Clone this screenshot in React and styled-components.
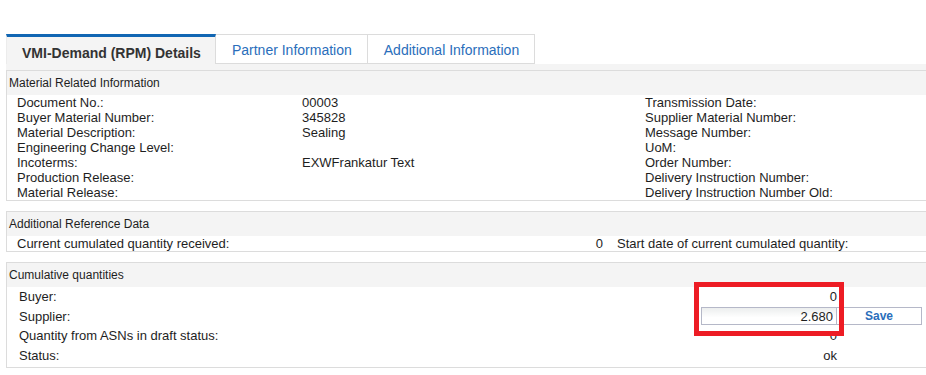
import { Fragment } from "react";
import styled, { createGlobalStyle } from "styled-components";

const GlobalStyle = createGlobalStyle`
  html, body {
    margin: 0;
    padding: 0;
    background: #fff;
    overflow: hidden;
  }
  body {
    font-family: "Liberation Sans", Arial, sans-serif;
    font-size: 13px;
    color: #1e1e1e;
  }
`;

const Page = styled.div`
  width: 930px;
  padding: 34px 0 0 6px;
  box-sizing: border-box;
`;

const TabBar = styled.div`
  display: flex;
  height: 30px;
`;

const Tab = styled.div`
  display: flex;
  align-items: center;
  padding: ${(p) => (p.$active ? "4px 14px 0 15px" : "1px 15px 0 16px")};
  box-sizing: border-box;
  font-size: 14px;
  font-weight: ${(p) => (p.$active ? "bold" : "normal")};
  color: ${(p) => (p.$active ? "#333" : "#2a6ebb")};
  background: ${(p) => (p.$active ? "#f4f4f4" : "#fff")};
  border: 1px solid #dcdcdc;
  border-left: ${(p) => (p.$active ? "1px solid #ececec" : "none")};
  border-top: ${(p) => (p.$active ? "3px solid #1166b3" : "1px solid #dcdcdc")};
  border-bottom: ${(p) => (p.$active ? "none" : "1px solid #dcdcdc")};
  cursor: pointer;
`;

const TabStrip = styled.div`
  height: 6px;
  background: #f4f4f4;
`;

const Panel = styled.section`
  position: relative;
  border: 1px solid #dcdcdc;
  border-right: none;
  margin-bottom: ${(p) => p.$gap || 0}px;
`;

const PanelHeader = styled.div`
  height: 24px;
  line-height: 24px;
  padding-left: 2px;
  background: #f4f4f4;
  font-size: 12px;
  color: #1e1e1e;
`;

const InfoGrid = styled.div`
  display: grid;
  grid-template-columns: 285px 343px 1fr;
  grid-auto-rows: 15px;
  padding-left: 10px;
  line-height: 15px;
`;

const RefGrid = styled.div`
  display: grid;
  grid-template-columns: 443px 157px 1fr;
  padding-left: 10px;
  height: 15px;
  line-height: 15px;
`;

const QtyGrid = styled.div`
  display: grid;
  grid-template-columns: 682px 136px 85px;
  grid-template-rows: 19px 20px 19px 20px;
  padding: 0 0 2px 12px;
  align-items: center;
`;

const Cell = styled.div`
  white-space: nowrap;
  text-align: ${(p) => (p.$right ? "right" : "left")};
  padding-right: ${(p) => p.$pad || 0}px;
`;

const QtyInput = styled.input`
  width: 136px;
  height: 18px;
  box-sizing: border-box;
  border: 1px solid #b5b8c8;
  background: linear-gradient(#eceeee, #fff 60%);
  font-family: "Liberation Sans", Arial, sans-serif;
  font-size: 13px;
  color: #1e1e1e;
  text-align: right;
  padding: 0 3px 0 0;
  outline: none;
`;

const SaveButton = styled.button`
  width: 85px;
  height: 18px;
  box-sizing: border-box;
  border: 1px solid #b5b8c8;
  border-left: none;
  background: #fff;
  font-family: "Liberation Sans", Arial, sans-serif;
  font-size: 12px;
  font-weight: bold;
  color: #2a6ebb;
  padding: 0;
  cursor: pointer;
`;

const Highlight = styled.div`
  position: absolute;
  left: 687px;
  top: 19px;
  width: 150px;
  height: 54px;
  box-sizing: border-box;
  border: 5px solid #ed1c24;
  pointer-events: none;
`;

const materialRows = [
  ["Document No.:", "00003", "Transmission Date:"],
  ["Buyer Material Number:", "345828", "Supplier Material Number:"],
  ["Material Description:", "Sealing", "Message Number:"],
  ["Engineering Change Level:", "", "UoM:"],
  ["Incoterms:", "EXWFrankatur Text", "Order Number:"],
  ["Production Release:", "", "Delivery Instruction Number:"],
  ["Material Release:", "", "Delivery Instruction Number Old:"],
];

const App = () => {
  return (
    <>
      <GlobalStyle />
      <Page>
        <TabBar>
          <Tab $active>VMI-Demand (RPM) Details</Tab>
          <Tab>Partner Information</Tab>
          <Tab>Additional Information</Tab>
        </TabBar>
        <TabStrip />

        <Panel $gap={10}>
          <PanelHeader>Material Related Information</PanelHeader>
          <InfoGrid>
            {materialRows.map(([label, value, right]) => (
              <Fragment key={label}>
                <Cell>{label}</Cell>
                <Cell>{value}</Cell>
                <Cell>{right}</Cell>
              </Fragment>
            ))}
          </InfoGrid>
        </Panel>

        <Panel $gap={10}>
          <PanelHeader>Additional Reference Data</PanelHeader>
          <RefGrid>
            <Cell>Current cumulated quantity received:</Cell>
            <Cell $right $pad={14}>0</Cell>
            <Cell>Start date of current cumulated quantity:</Cell>
          </RefGrid>
        </Panel>

        <Panel>
          <PanelHeader>Cumulative quantities</PanelHeader>
          <QtyGrid>
            <Cell>Buyer:</Cell>
            <Cell $right>0</Cell>
            <Cell />
            <Cell>Supplier:</Cell>
            <QtyInput defaultValue="2.680" />
            <SaveButton>Save</SaveButton>
            <Cell>Quantity from ASNs in draft status:</Cell>
            <Cell $right>0</Cell>
            <Cell />
            <Cell>Status:</Cell>
            <Cell $right>ok</Cell>
            <Cell />
          </QtyGrid>
          <Highlight />
        </Panel>
      </Page>
    </>
  );
};

export default App;
